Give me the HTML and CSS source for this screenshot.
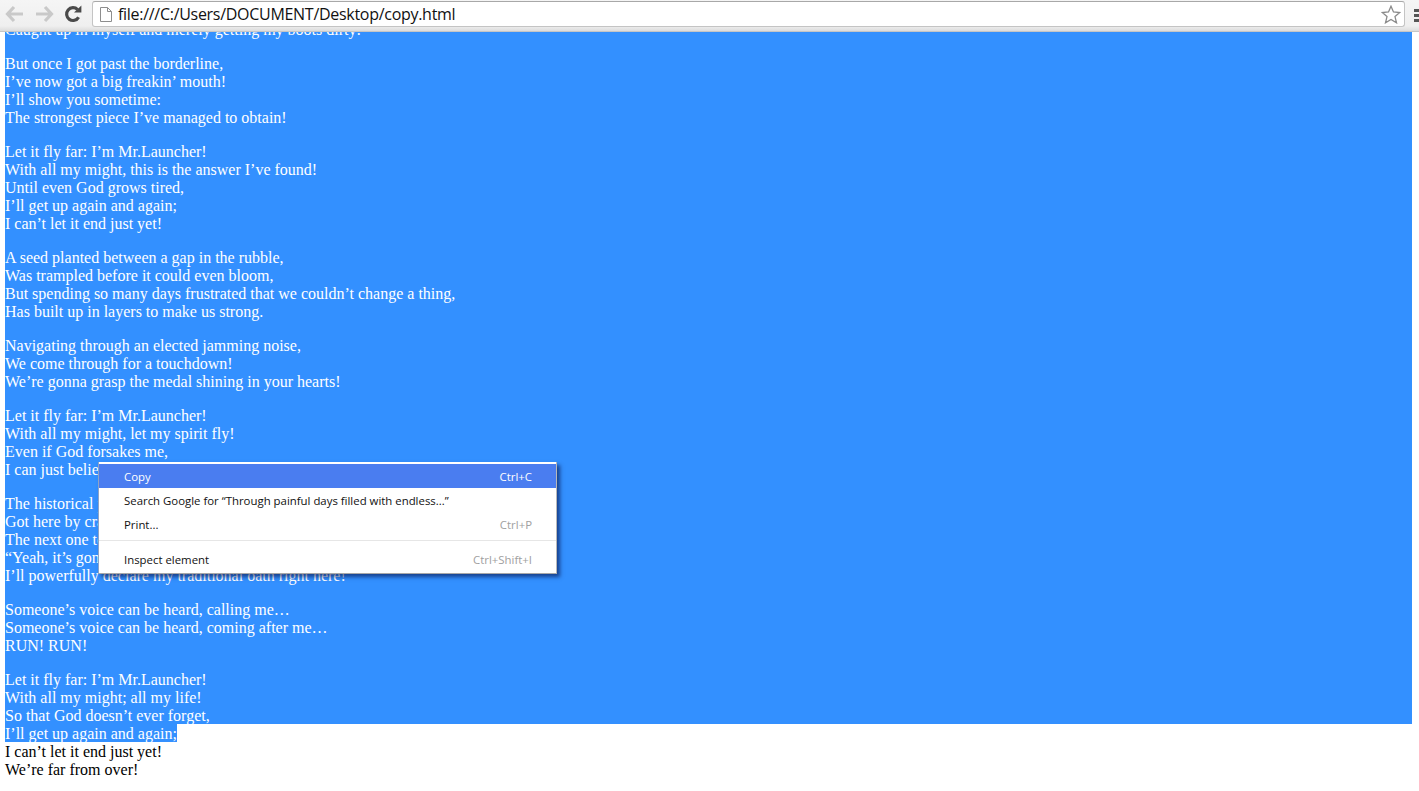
FILE: index.html
```html
<!DOCTYPE html>
<html lang="en">
<head>
<meta charset="utf-8">
<title>copy.html</title>
<link rel="stylesheet" href="styles.css">
</head>
<body>
<header class="toolbar">
  <svg class="nav-icon" width="22" height="22" viewBox="0 0 22 22"><path d="M10 4 L3.5 11 L10 18 M4 11 H19" fill="none" stroke="#c9c9c9" stroke-width="3.2"/></svg>
  <svg class="nav-icon" width="22" height="22" viewBox="0 0 22 22"><path d="M12 4 L18.5 11 L12 18 M18 11 H3" fill="none" stroke="#c9c9c9" stroke-width="3.2"/></svg>
  <svg class="nav-icon" width="22" height="22" viewBox="0 0 22 22"><path d="M16.6 14.2 A6.4 6.4 0 1 1 15.6 6.6" fill="none" stroke="#4a4a4a" stroke-width="3.2"/><path d="M12 9.6 H19.4 V2.4 Z" fill="#4a4a4a"/></svg>
  <div class="omnibox">
    <svg class="page-icon" width="12" height="15" viewBox="0 0 12 15"><path d="M.5 .5 H7.5 L11.5 4.5 V14.5 H.5 Z M7.5 .5 V4.5 H11.5" fill="#fff" stroke="#8e8e8e"/></svg>
    <span class="url">file:///C:/Users/DOCUMENT/Desktop/copy.html</span>
    <svg class="star" width="20" height="19" viewBox="0 0 20 19"><path d="M10 1.2 L12.5 7 L18.8 7.5 L14 11.6 L15.5 17.8 L10 14.5 L4.5 17.8 L6 11.6 L1.2 7.5 L7.5 7 Z" fill="#fff" stroke="#8a8a8a" stroke-width="1.3"/></svg>
  </div>
  <div class="bars"><i></i><i></i><i></i></div>
</header>
<main class="viewport">
  <div class="page">
    <div class="selected">
      <p>Caught up in myself and merely getting my boots dirty:</p>
      <p>But once I got past the borderline,<br>I’ve now got a big freakin’ mouth!<br>I’ll show you sometime:<br>The strongest piece I’ve managed to obtain!</p>
      <p>Let it fly far: I’m Mr.Launcher!<br>With all my might, this is the answer I’ve found!<br>Until even God grows tired,<br>I’ll get up again and again;<br>I can’t let it end just yet!</p>
      <p>A seed planted between a gap in the rubble,<br>Was trampled before it could even bloom,<br>But spending so many days frustrated that we couldn’t change a thing,<br>Has built up in layers to make us strong.</p>
      <p>Navigating through an elected jamming noise,<br>We come through for a touchdown!<br>We’re gonna grasp the medal shining in your hearts!</p>
      <p>Let it fly far: I’m Mr.Launcher!<br>With all my might, let my spirit fly!<br>Even if God forsakes me,<br>I can just believe in myself!</p>
      <p>The historical path behind me,<br>Got here by crawling along,<br>The next one to go is me,<br>“Yeah, it’s gonna be me!”<br>I’ll powerfully declare my traditional oath right here!</p>
      <p>Someone’s voice can be heard, calling me…<br>Someone’s voice can be heard, coming after me…<br>RUN! RUN!</p>
      <p>Let it fly far: I’m Mr.Launcher!<br>With all my might; all my life!<br>So that God doesn’t ever forget,</p>
    </div>
    <p class="tail"><span class="partial">I’ll get up again and again;</span><br>I can’t let it end just yet!<br>We’re far from over!</p>
  </div>
  <ul class="menu">
    <li class="item active"><span>Copy</span><span class="key">Ctrl+C</span></li>
    <li class="item"><span>Search Google for “Through painful days filled with endless...”</span></li>
    <li class="item"><span>Print...</span><span class="key">Ctrl+P</span></li>
    <li class="sep"></li>
    <li class="item"><span>Inspect element</span><span class="key">Ctrl+Shift+I</span></li>
  </ul>
</main>
</body>
</html>
```

FILE: styles.css
```css
* { box-sizing: border-box; }
html, body { margin: 0; height: 100%; overflow: hidden; background: #fff; }
body { display: flex; flex-direction: column; }

.toolbar {
  flex: 0 0 32px;
  display: flex;
  align-items: flex-start;
  padding: 1px 0 0 4px;
  background: linear-gradient(#f5f5f5 0, #efefef 26px, #dcdcdc 31px);
  border-bottom: 1px solid #c6c6c6;
}
.nav-icon { flex: none; margin: 2px 7px 0 0; }
.nav-icon:nth-child(3) { margin-right: 8px; }
.omnibox {
  flex: 1;
  height: 26px;
  display: flex;
  align-items: center;
  padding: 0 3px 0 7px;
  background: #fff;
  border: 1px solid #c4c4c4;
  border-top-color: #a8a8a8;
  border-radius: 3px;
}
.page-icon { flex: none; }
.url {
  flex: 1;
  margin-left: 6px;
  font: 16px/20px "Open Sans", "Noto Sans", sans-serif;
  color: #111;
  letter-spacing: -.29px;
}
.star { flex: none; }
.bars { flex: none; width: 14px; padding: 8px 0 0 9px; overflow: hidden; }
.bars i { display: block; width: 12px; height: 3px; margin-bottom: 2px; background: #555; }

.viewport { position: relative; flex: 1; overflow: hidden; }
.page {
  margin-top: -11px;
  padding: 0 7px 0 5px;
  font: 16px/18px "Liberation Serif", "Times New Roman", serif;
  color: #000;
}
.page p { margin: 0 0 16px; }
.selected {
  background: linear-gradient(#3390ff, #3390ff) no-repeat;
  background-size: 100% calc(100% - 1px);
  color: #fff;
}
.selected p:last-child { margin-bottom: 0; }
.partial {
  background: linear-gradient(#3390ff, #3390ff) no-repeat;
  background-size: 100% 17px;
  box-shadow: 0 -1px 0 #3390ff;
  color: #fff;
}

.menu {
  position: absolute;
  left: 98px;
  top: 430px;
  width: 459px;
  height: 112px;
  margin: 0;
  padding: 2px 0 0;
  list-style: none;
  background: #fff;
  box-shadow: 3px 3px 4px rgba(0, 0, 50, .55);
  border-left: 1px solid #8fa3c4;
  border-right: 1px solid #b8b8b8;
  border-bottom: 1px solid #a8a8a8;
  font: 11.4px/24px "Open Sans", "Noto Sans", sans-serif;
  color: #111;
}
.item {
  height: 24px;
  display: flex;
  justify-content: space-between;
  padding: 1px 24px 0 25px;
}
.item.active { background: #4a7df0; color: #fff; }
.key { color: #a0a0a0; }
.active .key { color: #fff; }
.sep { height: 1px; margin: 4px 0 6px; background: #e6e6e6; }
```
